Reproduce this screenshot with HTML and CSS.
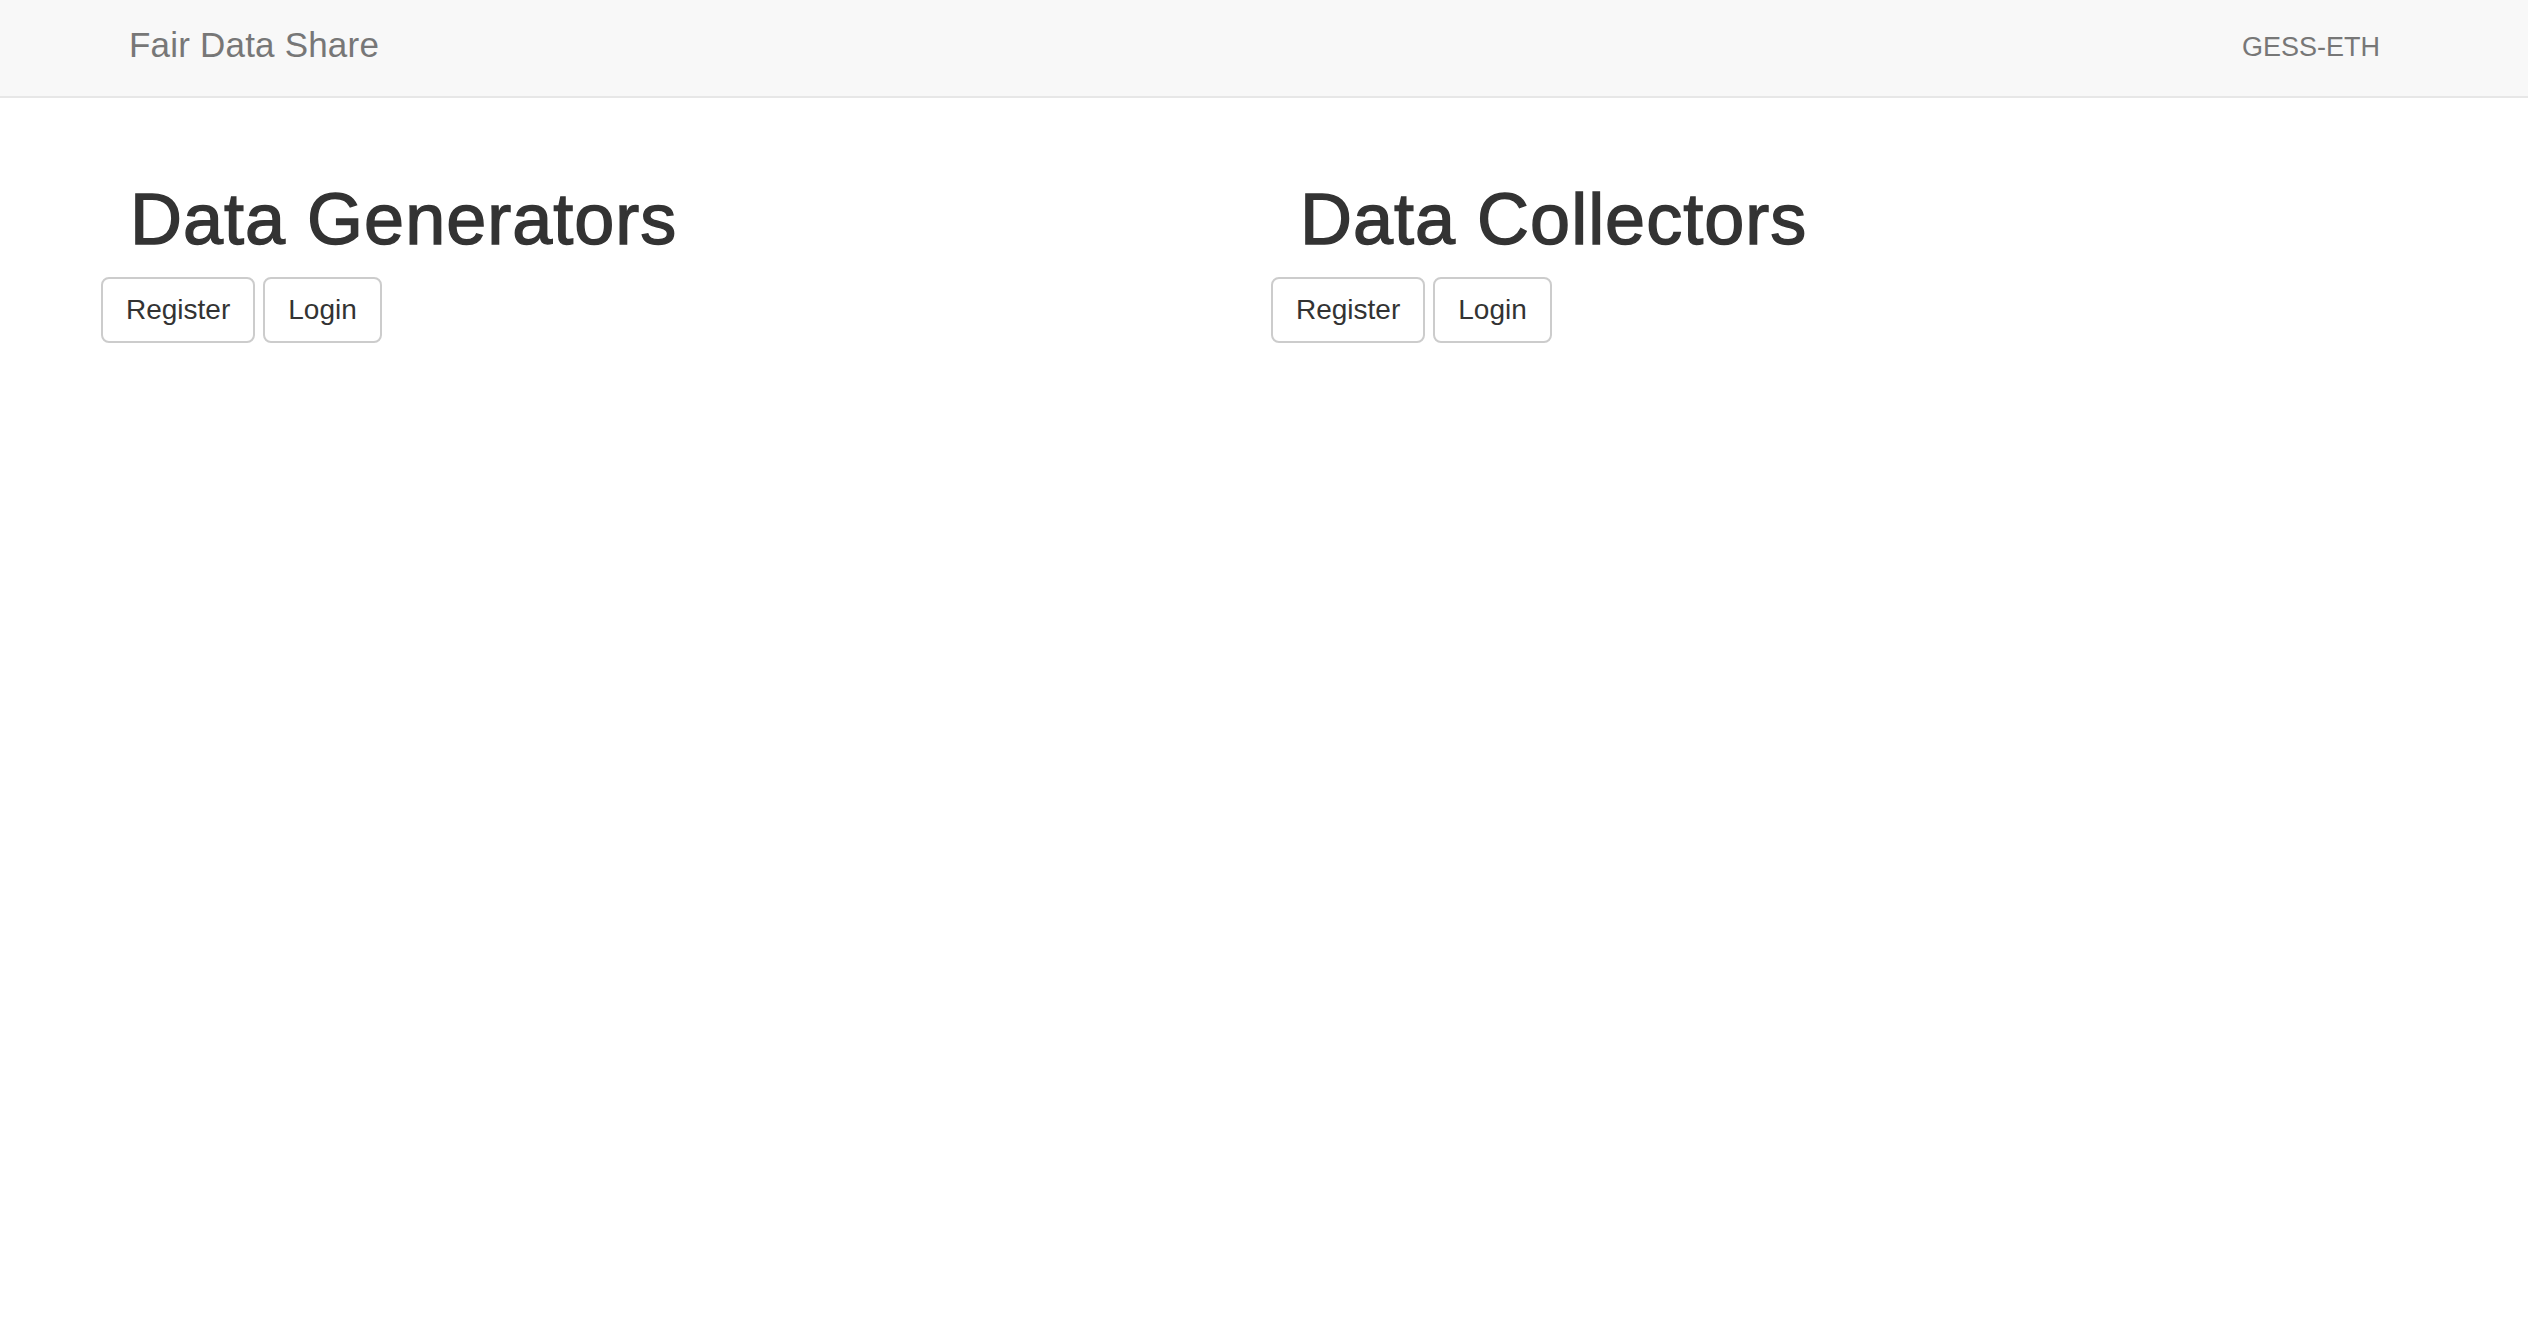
FILE: index.html
```html
<!DOCTYPE html>
<html lang="en">
<head>
<meta charset="utf-8">
<title>Fair Data Share</title>
<link rel="stylesheet" href="styles.css">
</head>
<body>
<nav class="navbar">
  <a class="brand" href="#">Fair Data Share</a>
  <span class="org">GESS-ETH</span>
</nav>
<main class="main">
  <section class="col">
    <h1 class="title">Data Generators</h1>
    <div class="actions">
      <button class="btn">Register</button>
      <button class="btn">Login</button>
    </div>
  </section>
  <section class="col">
    <h1 class="title">Data Collectors</h1>
    <div class="actions">
      <button class="btn">Register</button>
      <button class="btn">Login</button>
    </div>
  </section>
</main>
</body>
</html>
```

FILE: styles.css
```css
html, body {
  margin: 0;
  padding: 0;
  background: #fff;
  font-family: "Liberation Sans", Arial, Helvetica, sans-serif;
  color: #333;
}

.navbar {
  height: 96px;
  background: #f8f8f8;
  border-bottom: 2px solid #e7e7e7;
  display: flex;
  justify-content: space-between;
  align-items: flex-start;
  padding: 0 148px 0 129px;
}

.brand {
  font-size: 35px;
  line-height: 40px;
  letter-spacing: 0.2px;
  color: #777;
  text-decoration: none;
  padding-top: 25px;
}

.org {
  font-size: 27px;
  line-height: 40px;
  color: #777;
  padding-top: 27px;
}

.main {
  display: grid;
  grid-template-columns: 1170px 1170px;
  padding-left: 101px;
}

.title {
  margin: 82px 0 18px;
  padding-left: 29px;
  font-size: 72px;
  line-height: 79px;
  font-weight: 500;
  letter-spacing: 1px;
  -webkit-text-stroke: 1.4px #333;
  color: #333;
}

.actions {
  display: flex;
  gap: 8px;
}

.btn {
  font-family: "Liberation Sans", Arial, Helvetica, sans-serif;
  font-size: 28px;
  line-height: 40px;
  color: #333;
  background: #fff;
  border: 2px solid #ccc;
  border-radius: 8px;
  padding: 11px 23px;
  margin: 0;
  cursor: pointer;
}
```
